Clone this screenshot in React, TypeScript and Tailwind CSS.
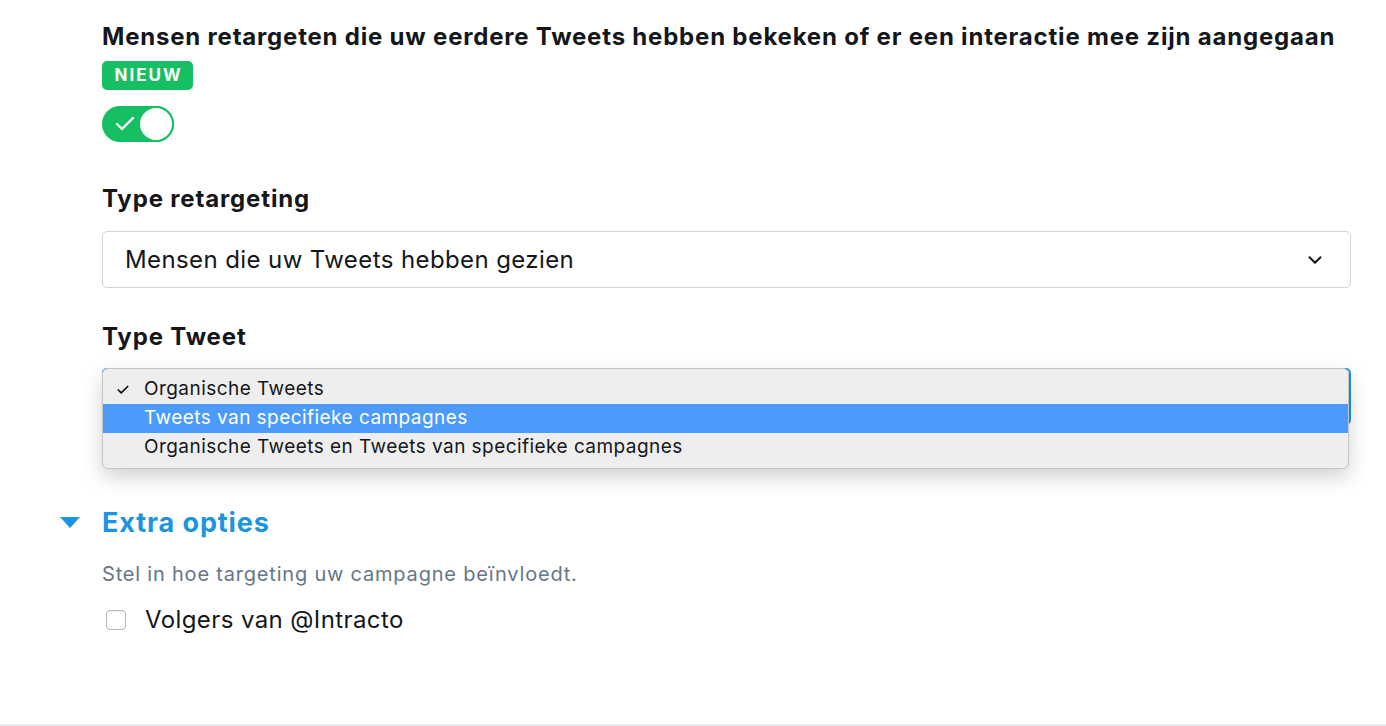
import { Check, ChevronDown } from "lucide-react";

const font = { fontFamily: 'Inter, "Liberation Sans", Arial, sans-serif' };

export default function App() {
	return (
		<div
			className="relative h-[726px] w-full overflow-hidden border-b-2 border-[#e6ecf0] bg-white text-[#14171a]"
			style={font}
		>
			<div className="flex flex-col pl-[102px] pr-[35px] pt-[22px]">
				<h2 className="text-[24px] font-bold leading-[30px] tracking-[0.8px]">
					Mensen retargeten die uw eerdere Tweets hebben bekeken of er een interactie mee zijn aangegaan
				</h2>
				<span className="mt-[9px] inline-flex h-[29px] w-[91px] items-center justify-center rounded-[5px] bg-[#17bf63] pl-[2px] text-[17px] font-bold tracking-[2px] text-white">
					NIEUW
				</span>
				<div className="mt-[16px] flex h-[36px] w-[72px] items-center rounded-full bg-[#17bf63]">
					<Check className="ml-[11px] h-[24px] w-[24px] text-white" strokeWidth={2.4} />
					<div className="ml-auto mr-0 h-[36px] w-[36px] rounded-full border-2 border-[#17bf63] bg-white" />
				</div>

				<h3 className="mt-[42px] text-[24px] font-bold leading-[30px] tracking-[0.85px]">Type retargeting</h3>
				<div className="mt-[17px] flex h-[57px] items-center justify-between rounded-[5px] border border-[#ccd6dd] pl-[22px] pr-[24px]">
					<span className="text-[24px] tracking-[0.4px]">Mensen die uw Tweets hebben gezien</span>
					<ChevronDown className="h-[22px] w-[22px]" strokeWidth={2.2} />
				</div>

				<h3 className="mt-[34px] text-[24px] font-bold leading-[30px] tracking-[0.85px]">Type Tweet</h3>
				<div className="relative mt-[16px] h-[57px] rounded-[5px] border-2 border-[#1b95e0]">
					<div className="absolute -left-[2px] -top-[2px] right-0 z-10 rounded-[6px] border border-[#c4c4c4] bg-[#eeeeee] py-[6px] text-[19px] tracking-[0.45px] shadow-[0_8px_20px_rgba(0,0,0,0.18)]">
						<div className="flex h-[29px] items-center">
							<Check className="ml-[13px] h-[14px] w-[14px]" strokeWidth={3} />
							<span className="ml-[14px]">Organische Tweets</span>
						</div>
						<div className="flex h-[29px] items-center bg-[#4c9bfa] pl-[41px] text-white">
							Tweets van specifieke campagnes
						</div>
						<div className="flex h-[29px] items-center pl-[41px]">
							Organische Tweets en Tweets van specifieke campagnes
						</div>
					</div>
				</div>

				<div className="-ml-[42px] mt-[82px] flex items-center">
					<svg width="20" height="12" viewBox="0 0 20 12" className="mr-[22px]">
						<polygon points="0,0 20,0 10,11" fill="#1b95e0" />
					</svg>
					<span className="text-[27px] font-bold leading-[32px] tracking-[0.9px] text-[#1b95e0]">Extra opties</span>
				</div>
				<p className="mt-[23px] text-[20px] leading-[24px] tracking-[0.8px] text-[#657786]">
					Stel in hoe targeting uw campagne beïnvloedt.
				</p>
				<label className="mt-[19px] flex items-center">
					<span className="ml-[4px] h-[20px] w-[20px] rounded-[4px] border border-[#b8b8b8] bg-white shadow-[inset_0_1px_1px_rgba(0,0,0,0.05)]" />
					<span className="ml-[19px] text-[24px] leading-[30px] tracking-[0.4px]">Volgers van @Intracto</span>
				</label>
			</div>
		</div>
	);
}
